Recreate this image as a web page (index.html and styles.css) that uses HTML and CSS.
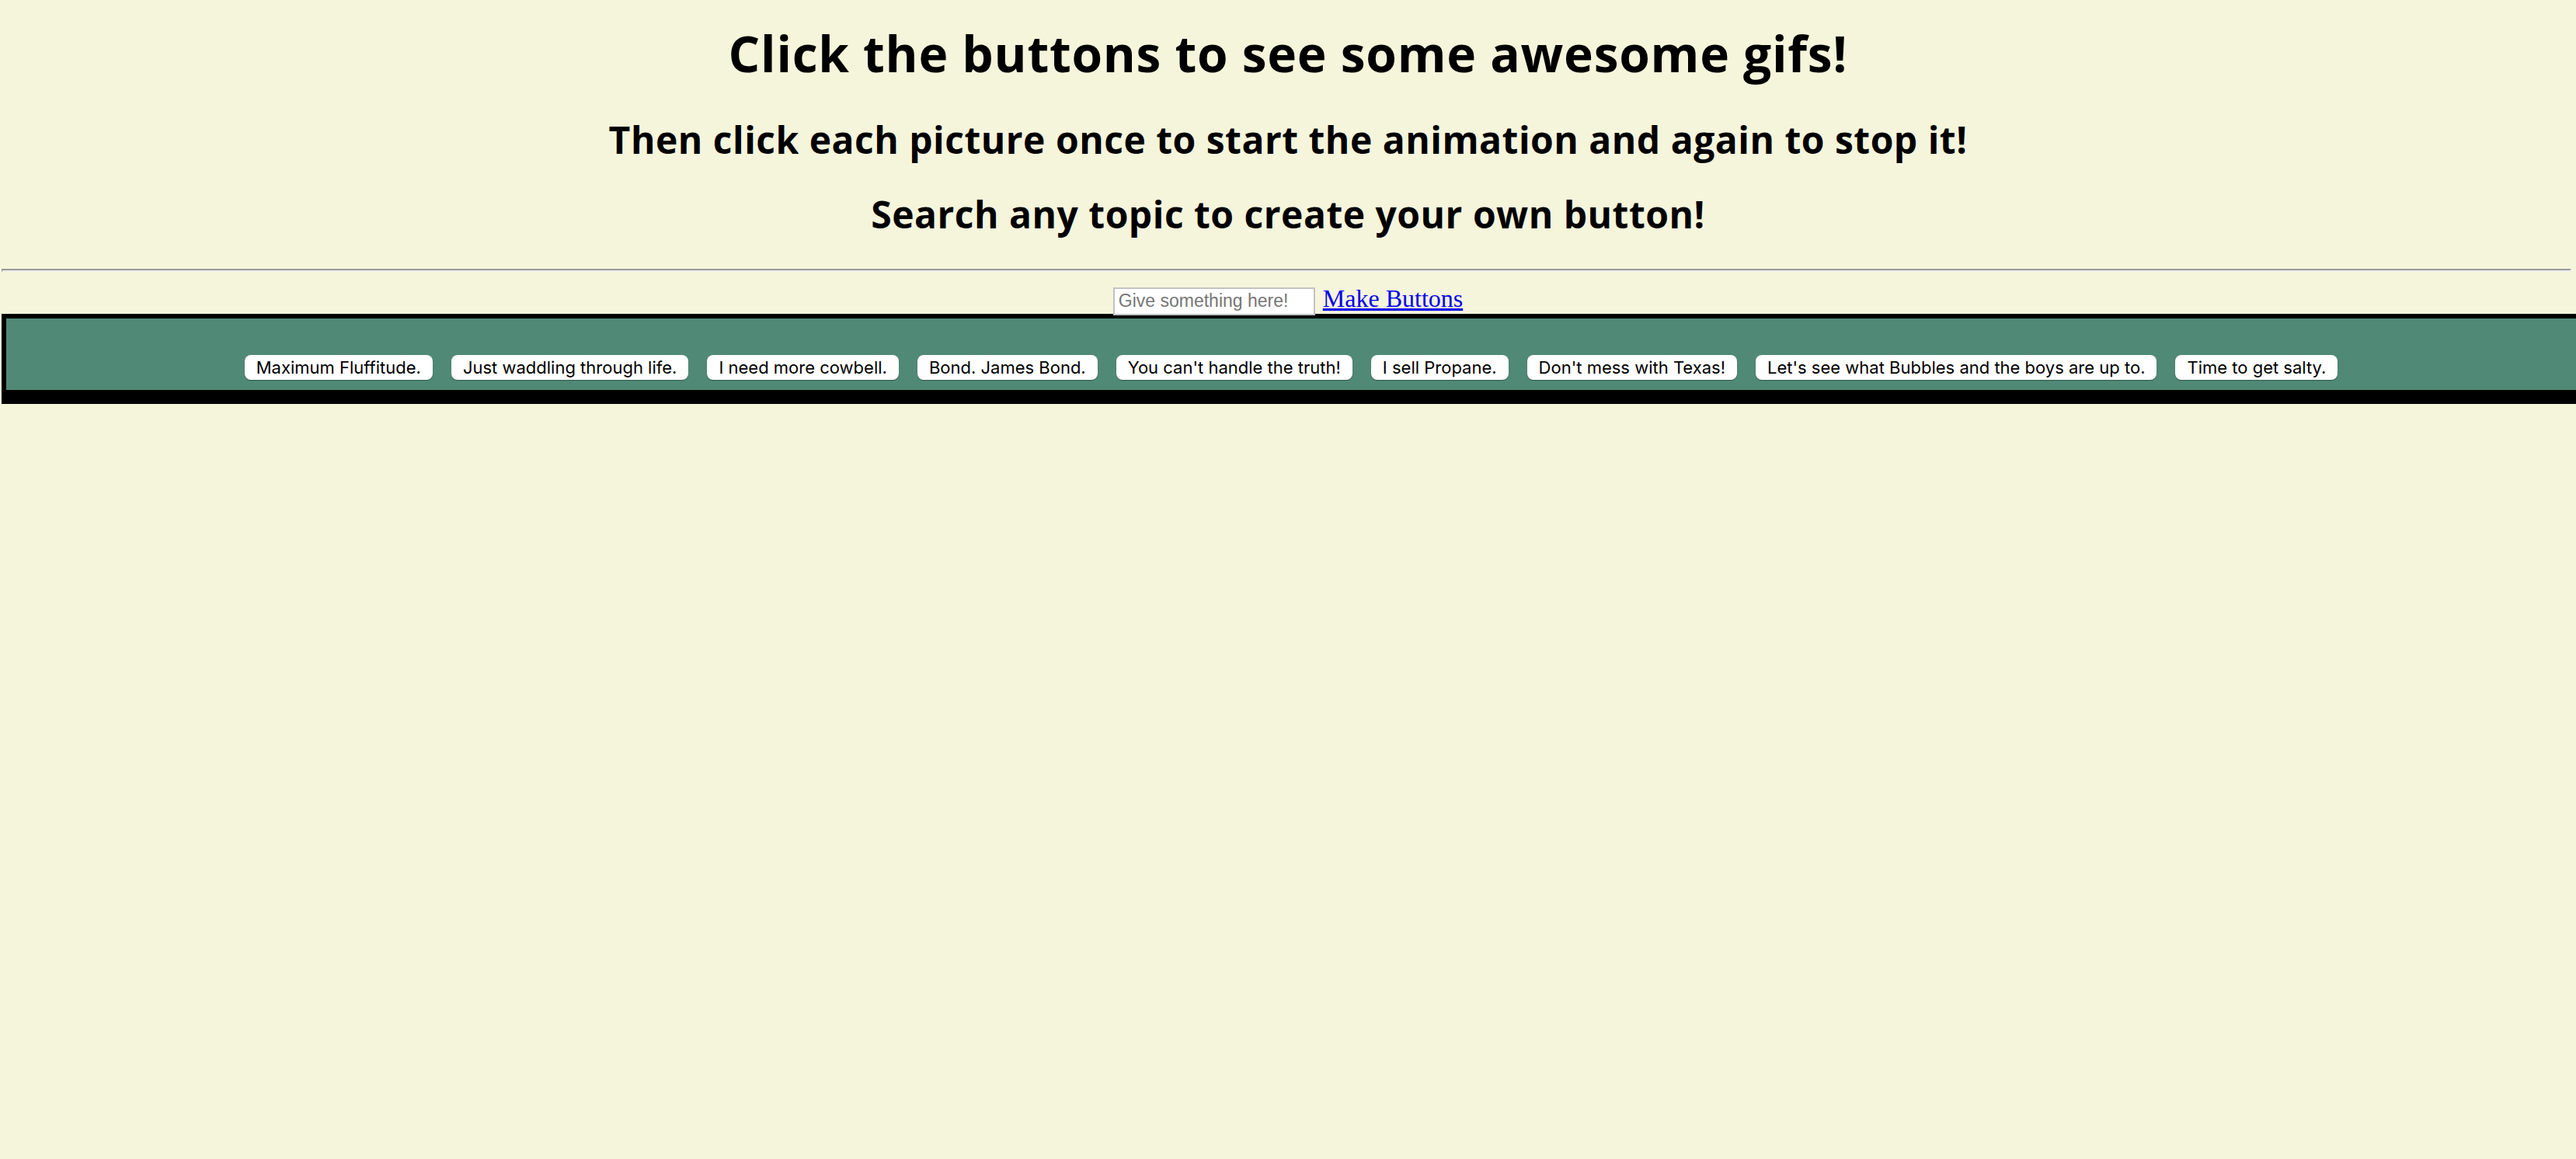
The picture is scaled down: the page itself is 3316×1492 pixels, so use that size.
FILE: index.html
```html
<!DOCTYPE html>
<html>
<head>
<meta charset="utf-8">
<title>Gif Buttons</title>
<link rel="stylesheet" href="styles.css">
</head>
<body>
<h1 class="title">Click the buttons to see some awesome gifs!</h1>
<h2 class="sub sub-first">Then click each picture once to start the animation and again to stop it!</h2>
<h2 class="sub sub-second">Search any topic to create your own button!</h2>
<hr class="rule">
<form class="maker">
  <input class="topic" type="text" placeholder="Give something here!">
  <a class="make" href="#">Make Buttons</a>
</form>
<div class="panel">
  <div class="buttons">
    <button class="gif-btn">Maximum Fluffitude.</button>
    <button class="gif-btn">Just waddling through life.</button>
    <button class="gif-btn">I need more cowbell.</button>
    <button class="gif-btn">Bond. James Bond.</button>
    <button class="gif-btn">You can't handle the truth!</button>
    <button class="gif-btn">I sell Propane.</button>
    <button class="gif-btn">Don't mess with Texas!</button>
    <button class="gif-btn">Let's see what Bubbles and the boys are up to.</button>
    <button class="gif-btn">Time to get salty.</button>
  </div>
  <div class="gifs"></div>
</div>
</body>
</html>
```
FILE: styles.css
```css
html, body {
  margin: 0;
  padding: 0;
  background: #f5f5dc;
  overflow-x: hidden;
}

body {
  font-family: "Liberation Serif", serif;
  color: #000;
}

.title {
  margin: 32px 0 0;
  font-family: "Open Sans", Lato, sans-serif;
  font-weight: 700;
  font-size: 64px;
  line-height: 74px;
  letter-spacing: 0.74px;
  text-align: center;
}

.sub {
  margin: 0;
  font-family: "Open Sans", Lato, sans-serif;
  font-weight: 700;
  font-size: 48px;
  line-height: 56px;
  letter-spacing: 0.5px;
  text-align: center;
}

.sub-first {
  margin-top: 46px;
}

.sub-second {
  margin-top: 40px;
}

.rule {
  margin: 42px 6px 16px 2px;
  height: 0;
  border-style: solid;
  border-width: 2px;
  border-color: #9a9a9a #ececec #ececec #9a9a9a;
}

.maker {
  margin: 0;
  display: flex;
  justify-content: center;
  align-items: baseline;
  gap: 10px;
  height: 38px;
}

.topic {
  box-sizing: border-box;
  width: 260px;
  height: 36px;
  margin: 1px 0 0;
  padding: 0 5px;
  border: 2px solid #c3c3c3;
  background: #fff;
  font-family: "Liberation Sans", Arial, sans-serif;
  font-size: 23px;
  color: #000;
}

.topic::placeholder {
  color: #767676;
}

.make {
  font-family: "Liberation Serif", "Times New Roman", serif;
  font-size: 32px;
  color: #0000ee;
  text-decoration: underline;
}

.panel {
  margin-left: 2px;
  width: calc(100% - 8px);
  border: 6px solid #000;
  border-right: none;
  border-bottom: none;
  background: #000;
}

.buttons {
  display: flex;
  justify-content: center;
  gap: 24px;
  padding: 47px 0 13px;
  background: #508976;
}

.gif-btn {
  height: 32px;
  padding: 0 15px;
  border: none;
  border-radius: 8px;
  background: #fff;
  box-shadow: 0 1px 1px rgba(0, 0, 0, 0.35);
  font-family: Inter, "Liberation Sans", sans-serif;
  font-size: 22px;
  color: #000;
  white-space: nowrap;
}

.gifs {
  height: 18px;
  background: #000;
}
```
